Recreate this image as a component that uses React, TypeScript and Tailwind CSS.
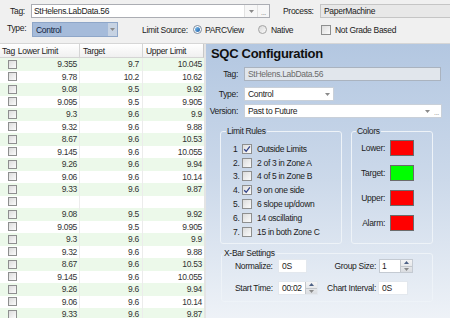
import React from "react";

const rows: string[][] = [
  ["9.355", "9.7", "10.045"],
  ["9.78", "10.2", "10.62"],
  ["9.08", "9.5", "9.92"],
  ["9.095", "9.5", "9.905"],
  ["9.3", "9.6", "9.9"],
  ["9.32", "9.6", "9.88"],
  ["8.67", "9.6", "10.53"],
  ["9.145", "9.6", "10.055"],
  ["9.26", "9.6", "9.94"],
  ["9.06", "9.6", "10.14"],
  ["9.33", "9.6", "9.87"],
  ["", "", ""],
  ["9.08", "9.5", "9.92"],
  ["9.095", "9.5", "9.905"],
  ["9.3", "9.6", "9.9"],
  ["9.32", "9.6", "9.88"],
  ["8.67", "9.6", "10.53"],
  ["9.145", "9.6", "10.055"],
  ["9.26", "9.6", "9.94"],
  ["9.06", "9.6", "10.14"],
  ["9.33", "9.6", "9.87"],
];

const rules = [
  ["1", "Outside Limits", true],
  ["2.", "2 of 3 in Zone A", false],
  ["3.", "4 of 5 in Zone B", false],
  ["4.", "9 on one side", true],
  ["5.", "6 slope up/down", false],
  ["6.", "14 oscillating", false],
  ["7.", "15 in both Zone C", false],
] as const;

const colors = [
  ["Lower:", "bg-[#ff0000]"],
  ["Target:", "bg-[#00ff00]"],
  ["Upper:", "bg-[#ff0000]"],
  ["Alarm:", "bg-[#ff0000]"],
];

function Check({ checked = false, size = 10 }: { checked?: boolean; size?: number }) {
  return (
    <div
      className="shrink-0 border border-[#8e8f8f] bg-linear-to-br from-[#dcdcdc] to-[#fbfbfb] flex items-center justify-center"
      style={{ width: size, height: size }}
    >
      {checked && (
        <svg width="8" height="8" viewBox="0 0 8 8">
          <path d="M1.2 4.2 L3.2 6.3 L6.9 1.3" fill="none" stroke="#33448a" strokeWidth="1.3" />
        </svg>
      )}
    </div>
  );
}

function Arrow() {
  return (
    <svg width="5" height="3" viewBox="0 0 5 3">
      <path d="M0 0 H5 L2.5 3 Z" fill="#8a8a8a" />
    </svg>
  );
}

function Spinner() {
  return (
    <div className="w-[12px] h-full border-l border-[#c3c7cc] bg-linear-to-b from-[#f4f4f4] to-[#dadde1] flex flex-col">
      <div className="flex-1 flex items-center justify-center border-b border-[#c3c7cc]">
        <svg width="5" height="3" viewBox="0 0 5 3">
          <path d="M0 3 H5 L2.5 0 Z" fill="#4d6185" />
        </svg>
      </div>
      <div className="flex-1 flex items-center justify-center">
        <Arrow />
      </div>
    </div>
  );
}

export default function App() {
  return (
    <div
      className="w-[450px] h-[318px] overflow-hidden flex flex-col text-[8.5px] tracking-[-0.3px] text-[#1c1c1c] leading-[10px]"
      style={{ fontFamily: '"Liberation Sans", Arial, sans-serif' }}
    >
      {/* top strip */}
      <div className="h-[44px] shrink-0 bg-[#f0f0f0] border-b border-[#d6d6d6] flex flex-col">
        <div className="flex items-center h-[14px] mt-[4px]">
          <span className="w-[31px] pl-[10px]">Tag:</span>
          <div className="w-[239px] h-[14px] bg-white border border-[#abadb3] flex items-center">
            <span className="flex-1 pl-[2px]">StHelens.LabData.56</span>
            <div className="w-[13px] h-full flex items-center justify-center bg-[#f7f7f7] border-l border-[#e2e2e2]">
              <Arrow />
            </div>
            <div className="w-[12px] h-full flex items-end justify-center bg-[#f7f7f7] border-l border-[#e2e2e2] text-[#777] text-[7px] leading-[9px]">
              ...
            </div>
          </div>
          <span className="ml-[13px] w-[37px]">Process:</span>
          <div className="flex-1 h-[14px] bg-[#e8e8e8] border border-r-0 border-[#c5c5c5] pl-[3px] flex items-center">
            PaperMachine
          </div>
        </div>
        <div className="flex items-center h-[15px] mt-[4px]">
          <span className="w-[32px] pl-[7px] -mt-[3px]">Type:</span>
          <div className="w-[86px] h-[15px] border border-[#8ea6c8] bg-[#a5bbda] flex items-center">
            <span className="flex-1 pl-[3px] text-[#10223d]">Control</span>
            <div className="w-[9px] h-full bg-[#c7d3e3] flex items-center justify-center">
              <Arrow />
            </div>
          </div>
          <span className="ml-[24px] w-[51px]">Limit Source:</span>
          <div className="w-[9px] h-[9px] rounded-full border border-[#7c8a9c] bg-white flex items-center justify-center">
            <div className="w-[5px] h-[5px] rounded-full bg-linear-to-br from-[#7fc2ee] to-[#1c5ea8]" />
          </div>
          <span className="ml-[3px] w-[53px]">PARCView</span>
          <div className="w-[9px] h-[9px] rounded-full border border-[#a3a3a3] bg-linear-to-br from-[#d8d8d8] to-[#fafafa]" />
          <span className="ml-[4px] w-[50px]">Native</span>
          <Check />
          <span className="ml-[4px]">Not Grade Based</span>
        </div>
      </div>

      <div className="flex flex-1 min-h-0">
        {/* grid */}
        <div className="w-[206px] shrink-0 bg-white border-r-2 border-[#e4e4e4] flex flex-col">
          <div className="h-[14px] shrink-0 flex bg-linear-to-b from-[#ffffff] to-[#f0f0f0] border-b border-[#d5d5d5] border-r border-r-[#c8c8c8] w-[204px]">
            <div className="w-[79px] flex items-center pl-[2px]">
              <span>Tag</span>
              <span className="ml-[3px]">Lower Limit</span>
            </div>
            <div className="w-[63px] border-l border-[#d5d5d5] flex items-center pl-[3px]">Target</div>
            <div className="flex-1 border-l border-[#d5d5d5] flex items-center pl-[3px]">Upper Limit</div>
          </div>
          {rows.map((r, i) => (
            <div
              key={i}
              className={`h-[12.5px] shrink-0 w-[204px] flex text-[#333] ${i % 2 === 0 ? "bg-[#ecf9ea]" : "bg-white"}`}
            >
              <div className="w-[19px] flex items-center pl-[8px]">
                <Check size={9} />
              </div>
              <div className="w-[60px] flex items-center justify-end pr-[2px]">{r[0]}</div>
              <div className="w-[63px] border-l border-[#ececec] flex items-center justify-end pr-[3px]">{r[1]}</div>
              <div className="flex-1 border-l border-[#ececec] flex items-center justify-end pr-[2px]">{r[2]}</div>
            </div>
          ))}
        </div>

        {/* SQC panel */}
        <div className="flex-1 bg-linear-to-b from-[#b3c7e1] via-[#ccd9ea] to-[#eef2f7] flex flex-col pt-[3px]">
          <div className="h-[13px] leading-[13px] pl-[5px] text-[13px] font-bold tracking-[-0.3px] text-[#101010]">
            SQC Configuration
          </div>

          <div className="flex items-center mt-[7px] h-[14px]">
            <span className="w-[32px] text-right">Tag:</span>
            <div className="ml-[6px] w-[197px] h-[14px] bg-[#e1e6ec] border border-[#aab3bf] pl-[3px] flex items-center text-[#6a6a6a]">
              StHelens.LabData.56
            </div>
          </div>

          <div className="flex items-center mt-[6px] h-[14px]">
            <span className="w-[32px] text-right">Type:</span>
            <div className="ml-[6px] w-[90px] h-[14px] bg-white border border-[#c9d0d9] pl-[3px] flex items-center">
              <span className="flex-1">Control</span>
              <div className="w-[12px] h-full flex items-center justify-center">
                <Arrow />
              </div>
            </div>
          </div>

          <div className="flex items-center mt-[3px] h-[14px]">
            <span className="w-[32px] text-right">Version:</span>
            <div className="ml-[6px] w-[198px] h-[14px] bg-white border border-[#c9d0d9] pl-[3px] flex items-center">
              <span className="flex-1">Past to Future</span>
              <div className="w-[10px] h-full flex items-center justify-center">
                <Arrow />
              </div>
              <div className="w-[9px] h-full flex items-end justify-center text-[#888] text-[7px] leading-[9px]">...</div>
            </div>
          </div>

          <div className="flex mt-[8px] ml-[14px] gap-[9px]">
            <fieldset className="w-[122px] h-[118px] border border-[#eef3f8] rounded-[3px]">
              <legend className="ml-[5px] px-[1px] leading-[10px]">Limit Rules</legend>
              <div className="flex flex-col pt-[6px] pl-[12px]">
                {rules.map(([n, label, on]) => (
                  <div key={label} className="h-[13.8px] flex items-center">
                    <span className="w-[9px]">{n}</span>
                    <Check checked={on} />
                    <span className="ml-[5px]">{label}</span>
                  </div>
                ))}
              </div>
            </fieldset>

            <fieldset className="w-[82px] h-[118px] border border-[#eef3f8] rounded-[3px]">
              <legend className="ml-[4px] px-[1px] leading-[10px]">Colors</legend>
              <div className="flex flex-col pt-[4px] gap-[9px]">
                {colors.map(([label, bg]) => (
                  <div key={label} className="h-[16px] flex items-center">
                    <span className="w-[33px] text-right">{label}</span>
                    <div className={`ml-[5px] w-[24px] h-[16px] border border-[#6b6b6b] ${bg}`} />
                  </div>
                ))}
              </div>
            </fieldset>
          </div>

          <fieldset className="mt-[4px] ml-[15px] w-[212px] h-[54px] border border-[#eef3f8] rounded-[3px]">
            <legend className="ml-[1px] px-[1px] leading-[10px]">X-Bar Settings</legend>
            <div className="grid grid-cols-[43px_40px_58px_auto] gap-y-[8px] pl-[13px] pt-[1px] items-center">
              <span>Normalize:</span>
              <div className="w-[29px] h-[14px] bg-white border border-[#e3e8ee] pl-[3px] flex items-center">0S</div>
              <span className="text-right">Group Size:</span>
              <div className="ml-[3px] w-[34px] h-[14px] bg-white border border-[#c4cad2] flex items-center">
                <span className="flex-1 pl-[2px]">1</span>
                <Spinner />
              </div>

              <span>Start Time:</span>
              <div className="w-[40px] h-[14px] bg-white border border-[#e3e8ee] flex items-center">
                <span className="flex-1 pl-[3px]">00:02</span>
                <Spinner />
              </div>
              <span className="text-right">Chart Interval:</span>
              <div className="ml-[2px] w-[30px] h-[14px] bg-white border border-[#e3e8ee] pl-[3px] flex items-center">0S</div>
            </div>
          </fieldset>
        </div>
      </div>
    </div>
  );
}
